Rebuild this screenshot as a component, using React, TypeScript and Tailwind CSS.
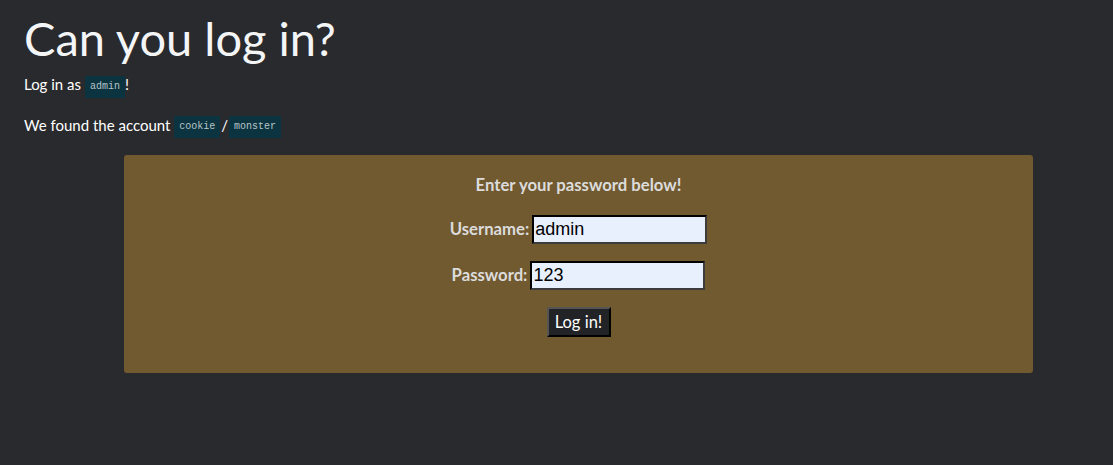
import React from "react";

const Code = ({ children }: { children: React.ReactNode }) => (
  <code className="inline-block bg-[#0c3440] text-[#b8c4c8] px-[5px] leading-[22px] text-[10px] align-middle font-['Liberation_Mono',monospace]">
    {children}
  </code>
);

const inputCls =
  "w-[175px] h-[29px] bg-[#e8f0fe] text-black text-[18px] px-[1px] border-2 border-t-black border-l-black border-r-[#3c3c3c] border-b-[#3c3c3c] font-['Liberation_Sans',sans-serif] font-normal outline-none";

const App = () => {
  return (
    <div className="w-[1113px] h-[465px] bg-[#292a2d] text-white font-['Lato',sans-serif] px-6 pt-[10px]">
      <h1 className="text-[47px] leading-[1.2] font-normal text-[#f4f5f7]">Can you log in?</h1>
      <p className="text-[15px] leading-[22px] mt-[7px]">
        Log in as <Code>admin</Code>!
      </p>
      <p className="text-[15px] leading-[22px] mt-[16px]">
        We found the account <Code>cookie</Code>
        <span className="mx-[1px]">/</span>
        <Code>monster</Code>
      </p>
      <div className="mx-[100px] mt-[17px] w-[909px] h-[218px] bg-[#715930] rounded-[3px] flex flex-col items-center pt-[19px] text-[#dcdcdc]">
        <div className="font-bold text-[16.7px] leading-[23px]">Enter your password below!</div>
        <div className="mt-[18px] flex items-center gap-[3px] font-bold text-[16.7px]">
          <span>Username:</span>
          <input readOnly value="admin" className={inputCls} />
        </div>
        <div className="mt-[17px] flex items-center gap-[3px] font-bold text-[16.7px]">
          <span>Password:</span>
          <input readOnly value="123" className={inputCls} />
        </div>
        <button className="mt-[17px] w-[64px] h-[30px] bg-[#222326] text-white text-[16.5px] border-2 border-t-[#555] border-l-[#555] border-r-black border-b-black leading-none">
          Log in!
        </button>
      </div>
    </div>
  );
};

export default App;
